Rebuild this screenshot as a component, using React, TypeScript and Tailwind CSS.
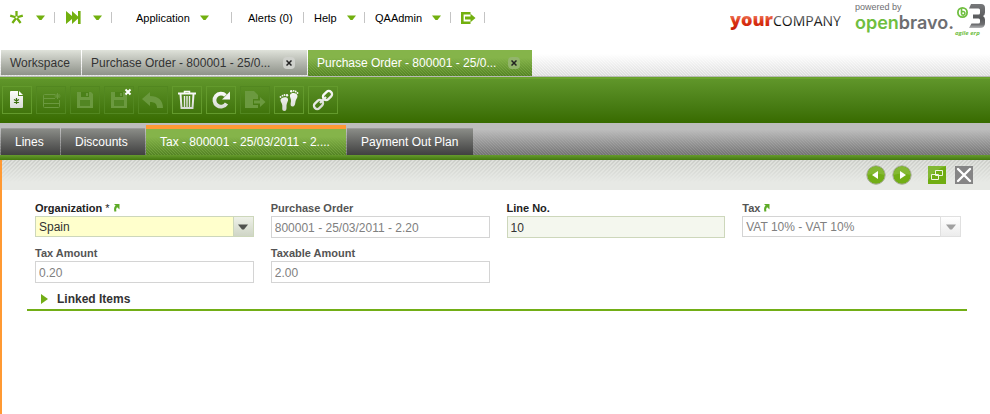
import React from "react";
import clsx from "clsx";

// fading cover on top, 3px diagonal weave below
const lightStripes =
  "bg-[linear-gradient(to_bottom,#ffffff_15%,transparent),linear-gradient(45deg,#dedede_25%,#ededed_25%_50%,#dedede_50%_75%,#ededed_75%)] bg-[length:100%_100%,3px_3px]";
const greenStripes =
  "bg-[linear-gradient(to_bottom,#85b44a_30%,transparent),linear-gradient(45deg,#548324_25%,#6b993a_25%_50%,#548324_50%_75%,#6b993a_75%)] bg-[length:100%_100%,3px_3px]";
const grayStripes =
  "bg-[linear-gradient(to_bottom,#bdbdbd_20%,transparent),linear-gradient(45deg,#737373_25%,#868686_25%_50%,#737373_50%_75%,#868686_75%)] bg-[length:100%_100%,3px_3px]";
const panelStripes =
  "bg-[linear-gradient(to_top,#e7e9e5_25%,transparent),linear-gradient(135deg,#cccec9_25%,#dee0db_25%_50%,#cccec9_50%_75%,#dee0db_75%)] bg-[length:100%_100%,4px_4px]";

function Caret() {
  return (
    <svg width="9" height="6" viewBox="0 0 9 6" aria-hidden="true">
      <path d="M0 .5h9L5.5 5h-2z" fill="#72b00f" />
    </svg>
  );
}

function Separator() {
  return <span className="h-[11px] w-px bg-[#c4c4c4]" />;
}

function MenuButton({
  label,
  className,
  children,
}: {
  label: string;
  className?: string;
  children: React.ReactNode;
}) {
  return (
    <button
      type="button"
      aria-label={label}
      className={clsx("flex items-center whitespace-nowrap", className)}
    >
      {children}
    </button>
  );
}

function NavBar() {
  return (
    <nav className="flex h-[35px] items-center text-[11px] leading-4 text-black">
      <MenuButton label="Quick create" className="w-[54px] gap-3 pl-[9px]">
        <svg width="15" height="15" viewBox="0 0 15 15">
          <path
            d="M7.5 7.5V1M7.5 7.5L1.2 5.6M7.5 7.5l6.3-1.9M7.5 7.5L3.4 13M7.5 7.5l4.1 5.5"
            stroke="#72b00f"
            strokeWidth="2.3"
          />
          <circle cx="7.5" cy="7.3" r="1.1" fill="#fff" />
        </svg>
        <Caret />
      </MenuButton>
      <Separator />
      <MenuButton label="Quick launch" className="w-14 gap-3 pl-[11px]">
        <svg width="15" height="13" viewBox="0 0 15 13">
          <path d="M0 0l6 5V0l6 5.500V0h2.600v13H12V7.500L6 13V8l-6 5z" fill="#72b00f" />
        </svg>
        <Caret />
      </MenuButton>
      <Separator />
      <MenuButton label="Application" className="w-[119px] gap-[10px] pl-6">
        Application
        <Caret />
      </MenuButton>
      <Separator />
      <MenuButton label="Alerts (0)" className="w-[71px] pl-4">
        Alerts (0)
      </MenuButton>
      <Separator />
      <MenuButton label="Help" className="w-[60px] gap-[10px] pl-[10px]">
        Help
        <Caret />
      </MenuButton>
      <Separator />
      <MenuButton label="QAAdmin" className="w-[85px] gap-[10px] pl-[10px]">
        QAAdmin
        <Caret />
      </MenuButton>
      <Separator />
      <MenuButton label="Log out" className="w-[33px] pl-[10px]">
        <svg width="15" height="12" viewBox="0 0 15 12">
          <path d="M9.5 1.3H1.3v9.4h8.2" fill="none" stroke="#72b00f" strokeWidth="2.6" />
          <path d="M4 4.500h5.500V1.800L14.500 6l-5 4.200V7.500H4z" fill="#72b00f" />
        </svg>
      </MenuButton>
      <Separator />
    </nav>
  );
}

function Logos() {
  return (
    <div className="flex items-start gap-[14px] pr-[3px]">
      <svg width="111" height="36" viewBox="0 0 111 36" role="img" aria-label="yourCOMPANY">
        <defs>
          <linearGradient id="your" x1="0" y1="0" x2="0" y2="1">
            <stop offset="0.4" stopColor="#ea6a4c" />
            <stop offset="0.6" stopColor="#dc3315" />
            <stop offset="1" stopColor="#c01a05" />
          </linearGradient>
          <linearGradient id="company" x1="0" y1="0" x2="0" y2="1">
            <stop offset="0.3" stopColor="#6a6a6a" />
            <stop offset="0.7" stopColor="#0c0c0c" />
          </linearGradient>
        </defs>
        <text x="0" y="26" fontFamily="Open Sans" fontWeight="800" fontSize="18" fill="url(#your)">
          your
        </text>
        <text x="43" y="26" fontFamily="Open Sans" fontSize="14" fill="url(#company)">
          COMPANY
        </text>
      </svg>
      <svg width="132" height="38" viewBox="0 0 132 38" role="img" aria-label="powered by openbravo 3">
        <defs>
          <linearGradient id="three" gradientUnits="userSpaceOnUse" x1="0" y1="4" x2="0" y2="28">
            <stop offset="0" stopColor="#77787a" />
            <stop offset="0.6" stopColor="#58595b" />
            <stop offset="0.85" stopColor="#6d6e70" />
            <stop offset="1" stopColor="#b5b6b8" />
          </linearGradient>
        </defs>
        <text x="0" y="10" fontFamily="Liberation Sans" fontSize="9" fill="#6d6e71">
          powered by
        </text>
        <text x="0" y="29" fontFamily="Inter" fontWeight="600" fontSize="18" fill="#6fbe3f">
          open
          <tspan fill="#6d6e71">bravo.</tspan>
        </text>
        <circle cx="107.5" cy="12.5" r="4.6" fill="none" stroke="#6fbe3f" strokeWidth="1.8" />
        <path
          d="M106.500 8v6M106.500 12.500a1.800 1.800 0 1 1 0 1.600"
          fill="none"
          stroke="#6fbe3f"
          strokeWidth="1.6"
        />
        <path
          d="M116 4h10q4 0 4 4v4.500q0 2.500-2 3.500 2 1 2 3.500V23q0 5-5 5h-11l2.500-4.500h7q1.500 0 1.500-1.500v-2q0-1.500-1.500-1.500H118v-4h5.500q1.500 0 1.500-1.500V10q0-1.500-1.500-1.500H114z"
          fill="url(#three)"
        />
        <text
          x="100"
          y="35"
          fontFamily="Open Sans"
          fontWeight="700"
          fontStyle="italic"
          fontSize="6"
          fill="#6fbe3f"
        >
          agile erp
        </text>
      </svg>
    </div>
  );
}

function WindowTab({
  title,
  active,
  closable,
  className,
}: {
  title: string;
  active?: boolean;
  closable?: boolean;
  className?: string;
}) {
  return (
    <div
      className={clsx(
        "flex items-center whitespace-nowrap pl-[9px]",
        active
          ? ["text-white", greenStripes]
          : "mb-px bg-[linear-gradient(to_bottom,#dfe2da,#b5b8b0_50%,#8e9289)] text-[#333]",
        className,
      )}
    >
      <button type="button" role="tab" aria-selected={!!active}>
        {title}
      </button>
      {closable && (
        <button
          type="button"
          aria-label="Close tab"
          className={clsx(
            "ml-auto mr-3 flex size-3 items-center justify-center rounded-sm",
            active ? "bg-[#93b56c]" : "bg-[#cfd1cc]",
          )}
        >
          <svg width="6" height="6" viewBox="0 0 6 6">
            <path d="M.5.500l5 5M5.500.500l-5 5" stroke="#222" strokeWidth="1.5" />
          </svg>
        </button>
      )}
    </div>
  );
}

function Floppy() {
  return (
    <>
      <path d="M7 6h14l2 2v14H7z" fill="currentColor" />
      <path d="M11 6h8v5h-8z" fill="#4b8119" />
      <path d="M16 7h2v3h-2z" fill="currentColor" />
      <path d="M10 14h10v6H10z" fill="#528623" />
    </>
  );
}

const toolbar: { label: string; disabled?: boolean; icon: React.ReactNode }[] = [
  {
    label: "New",
    icon: (
      <>
        <path d="M8 6q0-1 1-1h7v5h5v11q0 1-1 1H9q-1 0-1-1z" fill="url(#metal)" />
        <path d="M17 5l4 4h-4z" fill="#fff" />
        <path d="M14.500 12v6M12 13.500l5 3M17 13.500l-5 3" stroke="#3b6f0b" strokeWidth="1.2" />
      </>
    ),
  },
  {
    label: "New in form",
    disabled: true,
    icon: (
      <g fill="none" stroke="currentColor">
        <path d="M19 8.500H8.500q-1 0-1 1v11q0 1 1 1h14q1 0 1-1V14M7.500 12.500H19M7.500 17.500h16" />
        <path d="M21.500 7v6M18.500 10h6M19.500 8l4 4M23.500 8l-4 4" />
      </g>
    ),
  },
  { label: "Save", disabled: true, icon: <Floppy /> },
  {
    label: "Save and close",
    disabled: true,
    icon: (
      <>
        <Floppy />
        <path d="M21.500 3.500l5 5M26.500 3.500l-5 5" stroke="#fff" strokeWidth="2" />
      </>
    ),
  },
  {
    label: "Undo",
    disabled: true,
    icon: <path d="M4 13l8-7v4c8 0 13 4 13 12h-6c0-4-2-6-7-6v4z" fill="currentColor" />,
  },
  {
    label: "Delete",
    icon: (
      <g fill="none" stroke="url(#metal)">
        <path d="M6 7.500h18" strokeWidth="2" />
        <path d="M12.500 7V5.500h5V7" strokeWidth="1.5" />
        <path d="M8.500 8l1 14h11l1-14" strokeWidth="2" />
        <path d="M12.500 10v11M15 10v11M17.500 10v11" strokeWidth="1.4" />
      </g>
    ),
  },
  {
    label: "Refresh",
    icon: (
      <>
        <path
          d="M20.500 17.500a6.500 6.500 0 1 1-1-8"
          fill="none"
          stroke="url(#metal)"
          strokeWidth="3.8"
        />
        <path d="M24 5.500v8h-8z" fill="#f4f4f4" />
      </>
    ),
  },
  {
    label: "Export",
    disabled: true,
    icon: (
      <>
        <path d="M5 5h9l4 4v4h-5v6h5v3H5z" fill="currentColor" />
        <path d="M14 14.500h6V11l5.500 5-5.500 5v-3.500h-6z" fill="currentColor" />
      </>
    ),
  },
  {
    label: "Audit trail",
    icon: (
      <g fill="url(#metal)">
        <path d="M6.500 14c0-3 7-4 7.500-1 .6 2-1.500 4-1.500 6.500 0 2 .5 5.500-2 5.500-3 0-2-3-2.200-5.500C8.200 17.500 6.500 16 6.500 14z" />
        <path d="M16 9c1-3 7.500-2.500 7.500 1 0 2-1.700 3.500-2 5.500-.4 2.500-.5 5-3 5-2.700 0-1.700-3.500-1.500-5.500.2-2.200-1.500-4-1-6z" />
        <circle cx="6.5" cy="11" r=".9" />
        <circle cx="8.5" cy="9.7" r=".9" />
        <circle cx="10.5" cy="9" r=".9" />
        <circle cx="13" cy="9.2" r="1.2" />
        <circle cx="17.2" cy="5.2" r="1.2" />
        <circle cx="19.7" cy="4.8" r=".9" />
        <circle cx="21.7" cy="5.5" r=".9" />
        <circle cx="23.5" cy="7" r=".9" />
      </g>
    ),
  },
  {
    label: "Link",
    icon: (
      <g fill="none" stroke="url(#metal)" strokeWidth="2.3">
        <rect x="14.5" y="6.3" width="10" height="6.4" rx="3" transform="rotate(-45 19.5 9.5)" />
        <rect x="5.5" y="15.3" width="10" height="6.4" rx="3" transform="rotate(-45 10.5 18.5)" />
        <path d="M12 17l6-6" />
      </g>
    ),
  },
];

function Toolbar() {
  return (
    <div
      role="toolbar"
      className="flex gap-1 border-t-2 border-[#6ba32e] bg-linear-to-b from-[#60962a] to-[#386b00] px-[2px] pb-[9px] pt-[7px]"
    >
      {toolbar.map((item) => (
        <button
          key={item.label}
          type="button"
          aria-label={item.label}
          disabled={item.disabled}
          className={clsx(
            "h-7 w-[30px] border",
            item.disabled ? "border-[#528720] text-[#6b993f]" : "border-[#639a2c] text-white",
          )}
        >
          <svg width="30" height="28" viewBox="0 0 30 28" className="-m-px">
            <defs>
              <linearGradient id="metal" gradientUnits="userSpaceOnUse" x1="0" y1="4" x2="0" y2="24">
                <stop offset="0" stopColor="#fff" />
                <stop offset="1" stopColor="#d4d8d0" />
              </linearGradient>
            </defs>
            {item.icon}
          </svg>
        </button>
      ))}
    </div>
  );
}

function ChildTab({
  title,
  active,
  className,
}: {
  title: string;
  active?: boolean;
  className?: string;
}) {
  return (
    <button
      type="button"
      role="tab"
      aria-selected={!!active}
      className={clsx(
        "whitespace-nowrap pl-[14px] text-left text-white",
        active
          ? ["h-[30px] border-t-4 border-[#ff9933]", greenStripes]
          : "h-[27px] border-t border-[#9b9b9b] bg-linear-to-b from-[#8a8c87] to-[#414141]",
        className,
      )}
    >
      {title}
    </button>
  );
}

function PanelControls() {
  return (
    <div className={clsx("flex h-[30px] items-center justify-end pr-[17px]", panelStripes)}>
      {["M12 6v8l-6-4z", "M8 6v8l6-4z"].map((d, i) => (
        <button
          key={d}
          type="button"
          aria-label={i ? "Next record" : "Previous record"}
          className="mr-[6px]"
        >
          <svg width="20" height="20" viewBox="0 0 20 20">
            <circle cx="10" cy="10" r="9.2" fill="#72ae16" stroke="#a9ab9f" />
            <path d="M1.500 10a8.500 8.500 0 0 1 17 0q-9-3-17 0z" fill="#84b833" />
            <path d={d} fill="#fff" />
          </svg>
        </button>
      ))}
      <button type="button" aria-label="Maximize" className="ml-[10px]">
        <svg width="18" height="18" viewBox="0 0 18 18">
          <path d="M0 0h18v18H0z" fill="#70ad12" />
          <path d="M0 0h18Q6 4 0 14z" fill="#82b833" />
          <path d="M7.500 4.500h7v5h-7zM3.500 8.500h7v5h-7z" fill="none" stroke="#eef5e2" />
        </svg>
      </button>
      <button type="button" aria-label="Close form" className="ml-[9px]">
        <svg width="18" height="18" viewBox="0 0 18 18">
          <path d="M0 0h18v18H0z" fill="#858585" />
          <path d="M3 3l12 12M15 3L3 15" stroke="#fff" strokeWidth="2.4" strokeLinecap="round" />
        </svg>
      </button>
    </div>
  );
}

function LinkArrow() {
  return (
    <svg width="7" height="8" viewBox="0 0 7 8" aria-hidden="true">
      <path d="M1 0h5.500v5.500z" fill="#5eab28" />
      <path d="M5 1.500Q1 3 2.500 7.500" fill="none" stroke="#5eab28" strokeWidth="2" />
    </svg>
  );
}

type FieldProps = {
  id: string;
  label: string;
  value: string;
  kind?: "text" | "select";
  required?: boolean;
  linked?: boolean;
  disabled?: boolean;
};

function Field({ id, label, value, kind = "text", required, linked, disabled }: FieldProps) {
  return (
    <div>
      <label
        htmlFor={id}
        className={clsx(
          "flex h-4 items-center gap-[3px] whitespace-nowrap text-[11px] font-bold leading-4",
          disabled ? "text-[#545454]" : "text-[#222]",
        )}
      >
        {label}
        {required && <span className="font-normal">*</span>}
        {linked && <LinkArrow />}
      </label>
      {kind === "select" ? (
        <div className="relative">
          <select
            id={id}
            disabled={disabled}
            defaultValue={value}
            className={clsx(
              "block h-[21px] w-full appearance-none rounded-none border pl-[3px] pt-px opacity-100",
              disabled
                ? "border-[#d4d4d4] bg-white text-[#808080]"
                : "border-[#cdd7bb] bg-[#ffffcc] text-[#333]",
            )}
          >
            <option>{value}</option>
          </select>
          <span
            className={clsx(
              "pointer-events-none absolute inset-y-0 right-0 flex w-[21px] items-center justify-center border",
              disabled
                ? "border-[#e0e0e0] bg-linear-to-b from-white to-[#ececec]"
                : "border-[#cdd7bb] bg-linear-to-b from-[#eef1e8] to-[#cfd5c6]",
            )}
          >
            <svg width="10" height="6" viewBox="0 0 10 6">
              <path d="M0 .5h10L6 5.500H4z" fill={disabled ? "#a0a0a0" : "#50524e"} />
            </svg>
          </span>
        </div>
      ) : (
        <input
          id={id}
          type="text"
          disabled={disabled}
          defaultValue={value}
          className={clsx(
            "block h-[22px] w-full border pl-[3px] pt-px",
            disabled
              ? "border-[#d4d4d4] bg-white text-[#808080]"
              : "border-[#cdd7bb] bg-[#f4f7ee] text-[#333]",
          )}
        />
      )}
    </div>
  );
}

export default function App() {
  return (
    <div className="min-h-screen bg-white font-['Liberation_Sans',Arial,sans-serif] text-xs leading-4">
      <header className="flex h-[50px] items-start justify-between">
        <NavBar />
        <Logos />
      </header>

      <div
        role="tablist"
        className={clsx("flex h-[27px] gap-px border-b border-[#b8bbb5] pl-px", lightStripes)}
      >
        <WindowTab title="Workspace" className="w-20" />
        <WindowTab title="Purchase Order - 800001 - 25/0..." closable className="w-[225px]" />
        <WindowTab title="Purchase Order - 800001 - 25/0..." closable active className="w-[224px]" />
      </div>

      <Toolbar />

      <div role="tablist" className={clsx("flex h-8 items-end gap-px pl-px", grayStripes)}>
        <ChildTab title="Lines" className="w-[59px]" />
        <ChildTab title="Discounts" className="w-[84px]" />
        <ChildTab title="Tax - 800001 - 25/03/2011 - 2...." active className="w-[200px]" />
        <ChildTab title="Payment Out Plan" className="w-[126px]" />
      </div>
      <div className="h-[5px] bg-linear-to-b from-[#669b2d] to-[#44780e]" />

      <main className="min-h-[254px] border-l-2 border-[#ff9933]">
        <PanelControls />
        <form className="pl-[25px] pr-[23px] pt-[10px]">
          <div className="grid grid-cols-4 gap-x-[17px] gap-y-[7px] pl-2 pr-[6px]">
            <Field id="organization" label="Organization" value="Spain" kind="select" required linked />
            <Field id="order" label="Purchase Order" value="800001 - 25/03/2011 - 2.20" disabled />
            <Field id="line" label="Line No." value="10" />
            <Field id="tax" label="Tax" value="VAT 10% - VAT 10%" kind="select" linked disabled />
            <Field id="taxAmount" label="Tax Amount" value="0.20" disabled />
            <Field id="taxableAmount" label="Taxable Amount" value="2.00" disabled />
          </div>
          <button
            type="button"
            aria-expanded="false"
            className="mt-2 flex w-full items-center gap-[9px] border-b-2 border-[#72ae16] pb-[2px] pl-[14px] font-bold text-[#333]"
          >
            <svg width="7" height="10" viewBox="0 0 7 10">
              <path d="M0 0l7 5-7 5z" fill="#72ae16" />
            </svg>
            Linked Items
          </button>
        </form>
      </main>
    </div>
  );
}
